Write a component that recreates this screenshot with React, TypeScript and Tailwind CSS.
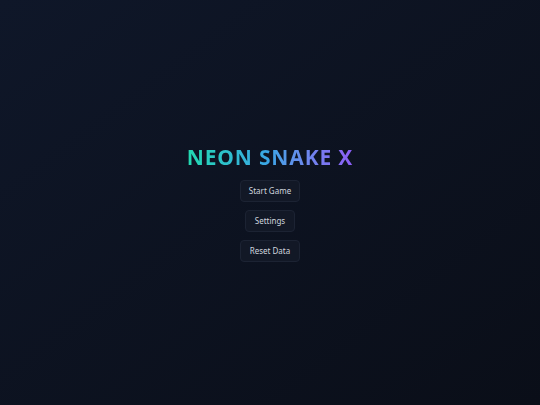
import React from 'react';

const App: React.FC = () => {
  const buttons = [
    { label: 'Start Game', w: 'w-[60px]' },
    { label: 'Settings', w: 'w-[50px]' },
    { label: 'Reset Data', w: 'w-[60px]' },
  ];

  return (
    <div
      className="h-screen w-full bg-gradient-to-br from-[#0f1729] to-[#0a0e18] flex flex-col items-center justify-center pt-[4px]"
      style={{ fontFamily: '"Noto Sans", "Open Sans", sans-serif' }}
    >
      <h1 className="text-[21px] leading-none font-bold tracking-[0.04em] bg-gradient-to-r from-[#22d9b0] via-[#3ba3e6] to-[#8b5cf6] bg-clip-text text-transparent">
        NEON SNAKE X
      </h1>

      {/* Menu */}
      <div className="mt-[12px] flex flex-col items-center gap-[8px]">
        {buttons.map((b) => (
          <button
            key={b.label}
            className={`${b.w} h-[22px] rounded-[4px] border border-[#1c2333] bg-[#121826] text-[8px] text-[#d0d6df] flex items-center justify-center`}
          >
            {b.label}
          </button>
        ))}
      </div>
    </div>
  );
};

export default App;
